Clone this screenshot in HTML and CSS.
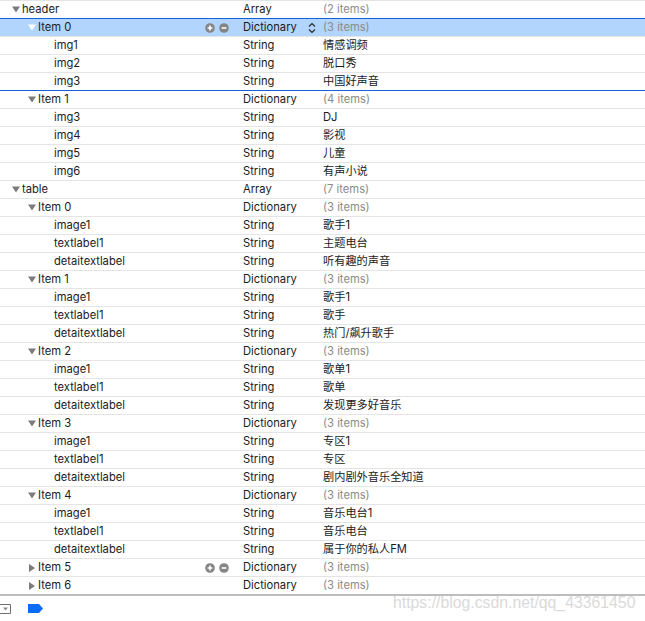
FILE: index.html
```html
<!DOCTYPE html>
<html>
<head>
<meta charset="utf-8">
<link rel="stylesheet" href="styles.css">
</head>
<body>
<div class="editor">
  <div class="list">
    <div class="row"><div class="key l0"><svg class="tri" viewBox="0 0 8 6"><polygon points="0,0 8,0 4,6"/></svg>header</div><div class="type">Array</div><div class="val gray">(2 items)</div></div>
    <div class="row sel blue"><div class="key l1"><svg class="tri" viewBox="0 0 8 6"><polygon points="0,0 8,0 4,6"/></svg>Item 0<span class="btns"><svg viewBox="0 0 10 10"><circle cx="5" cy="5" r="4.8"/><path d="M5 2.6v4.8M2.6 5h4.8"/></svg><svg viewBox="0 0 10 10"><circle cx="5" cy="5" r="4.8"/><path d="M2.6 5h4.8"/></svg></span></div><div class="type">Dictionary<svg class="step" viewBox="0 0 8 12"><path d="M1 4.5L4 1.5L7 4.5M1 7.5L4 10.5L7 7.5"/></svg></div><div class="val gray">(3 items)</div></div>
    <div class="row"><div class="key l2">img1</div><div class="type">String</div><div class="val">情感调频</div></div>
    <div class="row"><div class="key l2">img2</div><div class="type">String</div><div class="val">脱口秀</div></div>
    <div class="row"><div class="key l2">img3</div><div class="type">String</div><div class="val">中国好声音</div></div>
    <div class="row blue"><div class="key l1"><svg class="tri" viewBox="0 0 8 6"><polygon points="0,0 8,0 4,6"/></svg>Item 1</div><div class="type">Dictionary</div><div class="val gray">(4 items)</div></div>
    <div class="row"><div class="key l2">img3</div><div class="type">String</div><div class="val">DJ</div></div>
    <div class="row"><div class="key l2">img4</div><div class="type">String</div><div class="val">影视</div></div>
    <div class="row"><div class="key l2">img5</div><div class="type">String</div><div class="val">儿童</div></div>
    <div class="row"><div class="key l2">img6</div><div class="type">String</div><div class="val">有声小说</div></div>
    <div class="row"><div class="key l0"><svg class="tri" viewBox="0 0 8 6"><polygon points="0,0 8,0 4,6"/></svg>table</div><div class="type">Array</div><div class="val gray">(7 items)</div></div>
    <div class="row"><div class="key l1"><svg class="tri" viewBox="0 0 8 6"><polygon points="0,0 8,0 4,6"/></svg>Item 0</div><div class="type">Dictionary</div><div class="val gray">(3 items)</div></div>
    <div class="row"><div class="key l2">image1</div><div class="type">String</div><div class="val">歌手1</div></div>
    <div class="row"><div class="key l2">textlabel1</div><div class="type">String</div><div class="val">主题电台</div></div>
    <div class="row"><div class="key l2">detaitextlabel</div><div class="type">String</div><div class="val">听有趣的声音</div></div>
    <div class="row"><div class="key l1"><svg class="tri" viewBox="0 0 8 6"><polygon points="0,0 8,0 4,6"/></svg>Item 1</div><div class="type">Dictionary</div><div class="val gray">(3 items)</div></div>
    <div class="row"><div class="key l2">image1</div><div class="type">String</div><div class="val">歌手1</div></div>
    <div class="row"><div class="key l2">textlabel1</div><div class="type">String</div><div class="val">歌手</div></div>
    <div class="row"><div class="key l2">detaitextlabel</div><div class="type">String</div><div class="val">热门/飙升歌手</div></div>
    <div class="row"><div class="key l1"><svg class="tri" viewBox="0 0 8 6"><polygon points="0,0 8,0 4,6"/></svg>Item 2</div><div class="type">Dictionary</div><div class="val gray">(3 items)</div></div>
    <div class="row"><div class="key l2">image1</div><div class="type">String</div><div class="val">歌单1</div></div>
    <div class="row"><div class="key l2">textlabel1</div><div class="type">String</div><div class="val">歌单</div></div>
    <div class="row"><div class="key l2">detaitextlabel</div><div class="type">String</div><div class="val">发现更多好音乐</div></div>
    <div class="row"><div class="key l1"><svg class="tri" viewBox="0 0 8 6"><polygon points="0,0 8,0 4,6"/></svg>Item 3</div><div class="type">Dictionary</div><div class="val gray">(3 items)</div></div>
    <div class="row"><div class="key l2">image1</div><div class="type">String</div><div class="val">专区1</div></div>
    <div class="row"><div class="key l2">textlabel1</div><div class="type">String</div><div class="val">专区</div></div>
    <div class="row"><div class="key l2">detaitextlabel</div><div class="type">String</div><div class="val">剧内剧外音乐全知道</div></div>
    <div class="row"><div class="key l1"><svg class="tri" viewBox="0 0 8 6"><polygon points="0,0 8,0 4,6"/></svg>Item 4</div><div class="type">Dictionary</div><div class="val gray">(3 items)</div></div>
    <div class="row"><div class="key l2">image1</div><div class="type">String</div><div class="val">音乐电台1</div></div>
    <div class="row"><div class="key l2">textlabel1</div><div class="type">String</div><div class="val">音乐电台</div></div>
    <div class="row"><div class="key l2">detaitextlabel</div><div class="type">String</div><div class="val">属于你的私人FM</div></div>
    <div class="row"><div class="key l1"><svg class="tri closed" viewBox="0 0 8 8"><polygon points="1,0 7,4 1,8"/></svg>Item 5<span class="btns"><svg viewBox="0 0 10 10"><circle cx="5" cy="5" r="4.8"/><path d="M5 2.6v4.8M2.6 5h4.8"/></svg><svg viewBox="0 0 10 10"><circle cx="5" cy="5" r="4.8"/><path d="M2.6 5h4.8"/></svg></span></div><div class="type">Dictionary</div><div class="val gray">(3 items)</div></div>
    <div class="row"><div class="key l1"><svg class="tri closed" viewBox="0 0 8 8"><polygon points="1,0 7,4 1,8"/></svg>Item 6</div><div class="type">Dictionary</div><div class="val gray">(3 items)</div></div>
  </div>
  <div class="bar">
    <svg class="filter" viewBox="0 0 11 10"><path d="M0 0.5H10.5V9.5H0"/><polygon points="3,3.5 8,3.5 5.5,6.5"/></svg>
    <svg class="tag" viewBox="0 0 15 9"><polygon points="0,0 11,0 15,4.5 11,9 0,9"/></svg>
  </div>
  <div class="watermark">https://blog.csdn.net/qq_43361450</div>
</div>
</body>
</html>
```
FILE: styles.css
```css
html, body {
  margin: 0;
  padding: 0;
  background: #ffffff;
}
.editor {
  position: relative;
  width: 645px;
  height: 621px;
  font-family: Inter, "Liberation Sans", "Noto Sans CJK SC", sans-serif;
  font-size: 11.2px;
  color: #1b1b1b;
}
.list {
  border-bottom: 2px solid #bdbdbd;
}
.row {
  display: grid;
  grid-template-columns: 243px 80px 1fr;
  height: 18px;
  box-sizing: border-box;
  border-top: 1px solid #e4e4e4;
  align-items: center;
  line-height: 17px;
}
.row.blue {
  border-top-color: #1463d8;
}
.row.sel {
  background: #b1d5fc;
}
.key {
  display: flex;
  align-items: center;
  padding-right: 14px;
  white-space: nowrap;
}
.l0 { padding-left: 12px; }
.l1 { padding-left: 28px; }
.l2 { padding-left: 54px; }
.tri {
  width: 8px;
  height: 7px;
  margin-right: 2px;
  fill: #7b7b7b;
}
.tri.closed {
  height: 8px;
}
.sel .tri {
  fill: #ffffff;
}
.btns {
  margin-left: auto;
  display: flex;
  gap: 4px;
}
.btns svg {
  width: 10px;
  height: 10px;
}
.btns circle {
  fill: #858585;
}
.btns path {
  stroke: #ffffff;
  stroke-width: 1.6;
}
.type {
  display: flex;
  align-items: center;
  justify-content: space-between;
  padding-right: 7px;
}
.step {
  width: 8px;
  height: 12px;
  fill: none;
  stroke: #2a2a2a;
  stroke-width: 1.2;
}
.val {
  white-space: nowrap;
}
.gray {
  color: #8b8b8b;
}
.bar {
  display: flex;
  align-items: center;
  gap: 17px;
  height: 25px;
}
.filter {
  width: 11px;
  height: 10px;
  fill: none;
  stroke: #6f6f6f;
  stroke-width: 1;
}
.filter polygon {
  fill: #8a8a8a;
  stroke: none;
}
.tag {
  width: 15px;
  height: 9px;
  fill: #0a6cf4;
}
.watermark {
  position: absolute;
  left: 393px;
  top: 593px;
  font-family: "Liberation Sans", sans-serif;
  font-size: 15.8px;
  line-height: 20px;
  color: #dadada;
}
```
